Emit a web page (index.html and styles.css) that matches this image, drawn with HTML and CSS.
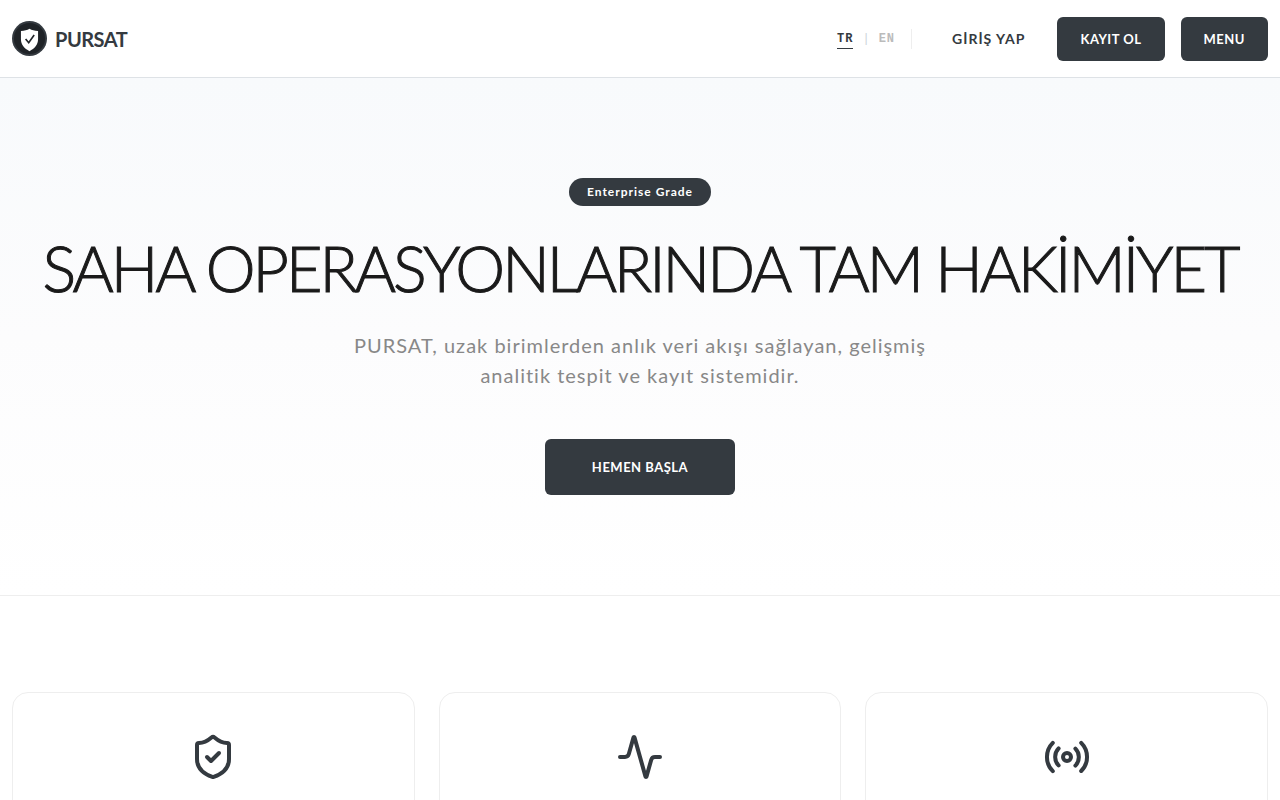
FILE: index.html
```html
<!DOCTYPE html>
<html lang="tr">
<head>
    <meta charset="UTF-8">
    <meta name="viewport" content="width=device-width, initial-scale=1.0">
    <title>PURSAT</title>
    <link rel="stylesheet" href="styles.css">
</head>
<body>
    <header class="navbar">
        <a class="brand" href="#">
            <svg class="brand-logo" viewBox="0 0 36 36" aria-hidden="true">
                <circle cx="18" cy="18" r="18" fill="#343a40"/>
                <circle cx="18" cy="18" r="16" fill="#1f2327"/>
                <path d="M18 8c2.500 1.400 5 2.200 8.800 2.400v8.400c0 5.400-3.500 9.700-8.800 12.200-5.300-2.500-8.800-6.800-8.800-12.200v-8.400c3.800-.2 6.300-1 8.800-2.400z" fill="#fff"/>
                <path d="M14 18.500l3.200 3.800 5.600-8" fill="none" stroke="#212529" stroke-width="1.700"/>
            </svg>
            <span>PURSAT</span>
        </a>
        <nav class="nav-actions">
            <div class="lang-switch">
                <a class="lang active" href="#">TR</a>
                <span class="lang-separator">|</span>
                <a class="lang" href="#">EN</a>
            </div>
            <a class="login-link" href="#">GİRİŞ YAP</a>
            <button class="btn btn-register" type="button">KAYIT OL</button>
            <button class="btn btn-menu" type="button">MENU</button>
        </nav>
    </header>

    <main>
        <section class="hero">
            <span class="badge">Enterprise Grade</span>
            <h1>SAHA OPERASYONLARINDA TAM HAKİMİYET</h1>
            <p>PURSAT, uzak birimlerden anlık veri akışı sağlayan, gelişmiş analitik tespit ve kayıt sistemidir.</p>
            <button class="btn btn-start" type="button">HEMEN BAŞLA</button>
        </section>

        <section class="features">
            <article class="card">
                <svg class="card-icon" viewBox="0 0 24 24" aria-hidden="true">
                    <path d="M20 13c0 5-3.500 7.500-7.660 8.950a1 1 0 0 1-.67-.01C7.500 20.500 4 18 4 13V6a1 1 0 0 1 1-1c2 0 4.500-1.200 6.240-2.720a1.170 1.170 0 0 1 1.520 0C14.510 3.810 17 5 19 5a1 1 0 0 1 1 1z"/>
                    <path d="m9 12 2 2 4-4"/>
                </svg>
            </article>
            <article class="card">
                <svg class="card-icon" viewBox="0 0 24 24" aria-hidden="true">
                    <path d="M22 12h-2.480a2 2 0 0 0-1.930 1.460l-2.350 8.360a.25.25 0 0 1-.48 0L9.240 2.180a.25.25 0 0 0-.48 0l-2.350 8.360A2 2 0 0 1 4.490 12H2"/>
                </svg>
            </article>
            <article class="card">
                <svg class="card-icon" viewBox="0 0 24 24" aria-hidden="true">
                    <path d="M4.900 19.100C1 15.200 1 8.800 4.900 4.900"/>
                    <path d="M7.800 16.200c-2.300-2.300-2.300-6.100 0-8.500"/>
                    <circle cx="12" cy="12" r="2"/>
                    <path d="M16.200 7.800c2.300 2.300 2.300 6.100 0 8.500"/>
                    <path d="M19.100 4.900C23 8.800 23 15.100 19.100 19"/>
                </svg>
            </article>
        </section>
    </main>
</body>
</html>
```
FILE: styles.css
```css
* {
    box-sizing: border-box;
}
body {
    margin: 0;
    font-family: Lato, sans-serif;
    color: #343a40;
    background-color: #fff;
}
a {
    color: inherit;
    text-decoration: none;
}
.navbar {
    display: flex;
    align-items: center;
    justify-content: space-between;
    min-height: 78px;
    padding: 0 12px;
    border-bottom: 1px solid #dee2e6;
}
.brand {
    display: flex;
    align-items: center;
    gap: 8px;
    font-size: 20px;
    font-weight: 700;
    letter-spacing: -0.5px;
}
.brand-logo {
    width: 35px;
    height: 35px;
}
.nav-actions {
    display: flex;
    align-items: center;
    gap: 16px;
}
.lang-switch {
    display: flex;
    align-items: center;
    gap: 9px;
    margin-right: 24px;
    padding-right: 16px;
    border-right: 1px solid #eee;
    font-family: "Liberation Mono", monospace;
    font-size: 12px;
    line-height: 16px;
    color: #bbb;
}
.lang {
    padding: 2px 0 1px;
    border-bottom: 1px solid transparent;
    font-weight: 700;
    letter-spacing: 1px;
}
.lang.active {
    color: #343a40;
    border-color: #343a40;
}
.lang-separator {
    color: #ccd3da;
}
.login-link {
    margin-right: 16px;
    font-size: 14px;
    font-weight: 700;
    letter-spacing: 1px;
}
.btn {
    padding: 0 23px;
    height: 44px;
    border: none;
    border-radius: 6px;
    background-color: #343a40;
    color: #fff;
    font-family: inherit;
    font-size: 13px;
    font-weight: 700;
    letter-spacing: 0.5px;
    cursor: pointer;
}
.btn:hover {
    background-color: #212529;
}
.hero {
    display: flex;
    flex-direction: column;
    align-items: center;
    padding: 100px 12px;
    border-bottom: 1px solid #eee;
    background: linear-gradient(#f8fafc, #fcfcfd 50%, #fff);
    text-align: center;
}
.badge {
    padding: 0 18px;
    border-radius: 14px;
    background-color: #343a40;
    color: #fff;
    font-size: 12px;
    font-weight: 700;
    line-height: 28px;
    letter-spacing: 1px;
}
h1 {
    margin: 24px 0;
    color: #1a1a1a;
    font-size: 63px;
    font-weight: 300;
    line-height: 76px;
    letter-spacing: -3px;
    -webkit-text-stroke: 1px #1a1a1a;
}
.hero p {
    max-width: 600px;
    margin: 0 0 49px;
    color: #888;
    font-size: 20px;
    font-weight: 400;
    line-height: 30px;
    letter-spacing: 1px;
}
.btn-start {
    height: 56px;
    padding: 0 47px;
}
.features {
    display: grid;
    grid-template-columns: repeat(3, 1fr);
    gap: 24px;
    padding: 96px 12px;
}
.card {
    min-height: 280px;
    padding: 40px;
    border: 1px solid #eee;
    border-radius: 16px;
    text-align: center;
}
.card-icon {
    width: 48px;
    height: 48px;
    fill: none;
    stroke: #343a40;
    stroke-width: 2;
    stroke-linecap: round;
    stroke-linejoin: round;
}
```
